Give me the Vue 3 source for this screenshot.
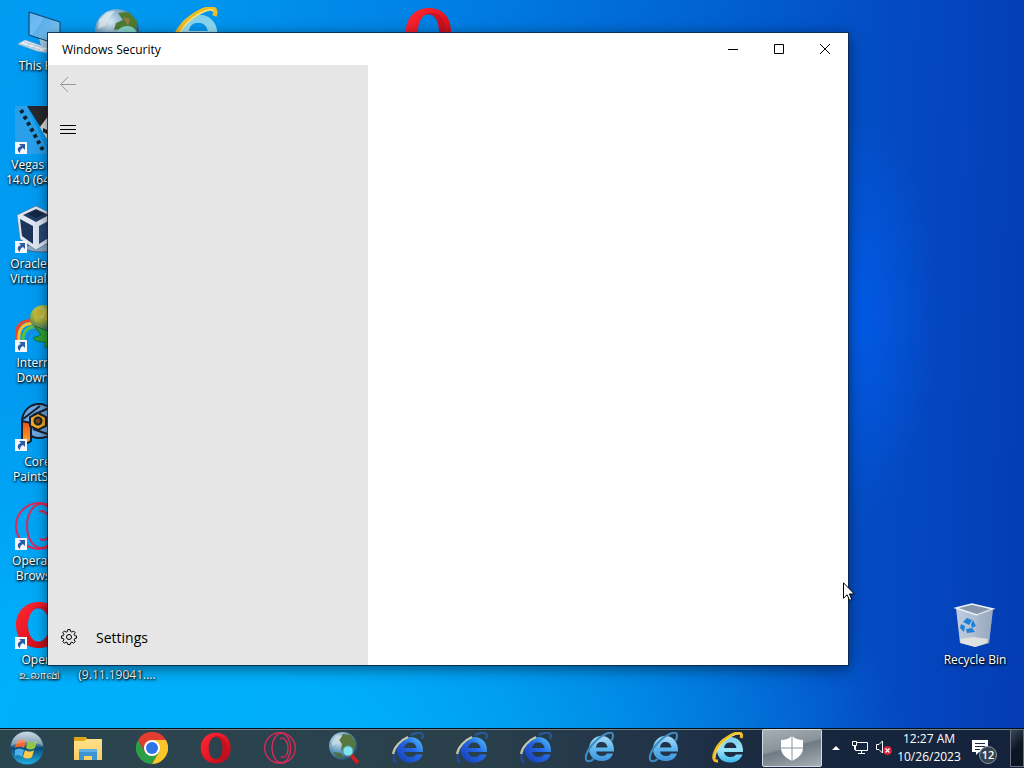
<script setup>
const desktopItems = [
  { icon: 'pc', lines: ['This PC'], col: 1, row: 1 },
  { icon: 'vegas', lines: ['Vegas Pro', '14.0 (64-bit)'], col: 1, row: 2, shortcut: true },
  { icon: 'vbox', lines: ['Oracle VM', 'VirtualBox'], col: 1, row: 3, shortcut: true },
  { icon: 'idm', lines: ['Internet', 'Downl...'], col: 1, row: 4, shortcut: true },
  { icon: 'paint', lines: ['Corel', 'PaintSh...'], col: 1, row: 5, shortcut: true },
  { icon: 'gx', lines: ['Opera GX', 'Browser'], col: 1, row: 6, shortcut: true },
  { icon: 'opera', lines: ['Opera', 'உலாவி'], col: 1, row: 7, shortcut: true },
  { icon: 'globe', lines: [], col: 2, row: 1 },
  { icon: '', lines: ['\u00a0', '(9.11.19041....'], col: 2, row: 7 },
  { icon: 'ie-gold', lines: [], col: 3, row: 1 },
  { icon: 'opera', lines: [], col: 6, row: 1 },
]

const taskbarItems = [
  { icon: 'folder', name: 'File Explorer' },
  { icon: 'chrome', name: 'Google Chrome' },
  { icon: 'opera', name: 'Opera' },
  { icon: 'gx', name: 'Opera GX' },
  { icon: 'globe-search', name: 'Web search' },
  { icon: 'ie-dark', name: 'Internet Explorer 6' },
  { icon: 'ie-dark', name: 'Internet Explorer 7' },
  { icon: 'ie-dark', name: 'Internet Explorer 8' },
  { icon: 'ie-light', name: 'Internet Explorer 9' },
  { icon: 'ie-light', name: 'Internet Explorer 10' },
  { icon: 'ie-gold', name: 'Internet Explorer 11' },
  { icon: 'shield', name: 'Windows Security', active: true },
]
</script>

<template>
  <div class="screen">
    <svg class="sprites" aria-hidden="true">
      <defs>
        <linearGradient id="g-screen" x1="0" y1="0" x2="1" y2="1">
          <stop offset="0" stop-color="#3f9fe6" /><stop offset="1" stop-color="#8ed0fa" />
        </linearGradient>
        <radialGradient id="g-globe" cx=".35" cy=".3" r=".75">
          <stop offset="0" stop-color="#d9ecf5" /><stop offset=".5" stop-color="#6fa0c4" /><stop offset="1" stop-color="#1d4a6e" />
        </radialGradient>
        <radialGradient id="g-idm" cx=".4" cy=".3" r=".75">
          <stop offset="0" stop-color="#e6e07a" /><stop offset=".5" stop-color="#8fa83a" /><stop offset="1" stop-color="#2c5f86" />
        </radialGradient>
        <linearGradient id="g-opera" x1="0" y1="0" x2="1" y2="1">
          <stop offset="0" stop-color="#ff2a35" /><stop offset=".55" stop-color="#e51422" /><stop offset="1" stop-color="#a80d18" />
        </linearGradient>
        <linearGradient id="g-ie-dark" x1="0" y1="1" x2="1" y2="0">
          <stop offset="0" stop-color="#163bb0" /><stop offset=".55" stop-color="#2467e6" /><stop offset="1" stop-color="#4fc8fa" />
        </linearGradient>
        <linearGradient id="g-ie-light" x1="0" y1="0" x2="0" y2="1">
          <stop offset="0" stop-color="#a5dcfa" /><stop offset=".5" stop-color="#5fb7f0" /><stop offset="1" stop-color="#3c94de" />
        </linearGradient>
        <linearGradient id="g-ie-gold" x1="0" y1="0" x2="0" y2="1">
          <stop offset="0" stop-color="#7ccdea" /><stop offset=".5" stop-color="#9be4fa" /><stop offset="1" stop-color="#3bb6e8" />
        </linearGradient>
        <linearGradient id="g-orange" x1="0" y1="0" x2="0" y2="1">
          <stop offset="0" stop-color="#e8501c" /><stop offset="1" stop-color="#ffb028" />
        </linearGradient>
        <linearGradient id="g-orb" x1="0" y1="0" x2="0" y2="1">
          <stop offset="0" stop-color="#c3d3de" /><stop offset=".4" stop-color="#537d96" /><stop offset=".5" stop-color="#0c4978" /><stop offset="1" stop-color="#22b4e6" />
        </linearGradient>
        <linearGradient id="g-bin" x1="0" y1="0" x2="1" y2="0">
          <stop offset="0" stop-color="#c9d3df" /><stop offset=".6" stop-color="#b6c2d2" /><stop offset="1" stop-color="#8d9db4" />
        </linearGradient>
        <linearGradient id="g-folder" x1="0" y1="0" x2="0" y2="1">
          <stop offset="0" stop-color="#ffe08a" /><stop offset="1" stop-color="#f8cf66" />
        </linearGradient>
      </defs>

      <symbol id="pc" viewBox="0 0 48 48">
        <path d="M24 31l8 3v7l6 2-8 3-12-4 8-3z" fill="#a9cde8" />
        <path d="M14 5l31 10v23L14 28z" fill="url(#g-screen)" stroke="#173e60" stroke-width="1" />
        <path d="M15 6l14 5-12 17-2-1z" fill="#8bccfa" opacity=".45" />
        <path d="M3 37l7-4 23 8-5 4-6-1z" fill="#e6eef5" stroke="#8fb2ce" stroke-width=".7" />
        <path d="M6 37l19 6M9 35l20 6M11 40l5-4M17 42l5-4" stroke="#a3bed3" stroke-width=".8" />
      </symbol>

      <symbol id="vegas" viewBox="0 0 48 48">
        <path d="M0 0h12l22 48H0z" fill="#35a2ea" opacity=".75" />
        <path d="M12 0h36L26 22z" fill="#29292d" />
        <path d="M25 21L36 6v34z" fill="#dedee0" />
        <path d="M28 22l4 2v4l-4-2z" fill="#222" />
        <path d="M6 4L29 46" stroke="#14202c" stroke-width="4" stroke-dasharray="3.5 3.5" />
      </symbol>

      <symbol id="vbox" viewBox="0 0 48 48">
        <ellipse cx="27" cy="43" rx="17" ry="4" fill="#8fa9c9" stroke="#46617f" />
        <path d="M21 1L2 10l3 24 16 11 17-10 2-25z" fill="#dfe7f2" stroke="#596b80" stroke-width=".6" />
        <path d="M21 4L8 10l13 7 13-7z" fill="#223b63" />
        <path d="M5 14l13 7v18L7 31z" fill="#1d3358" />
        <path d="M24 21l13-7-2 18-11 7z" fill="#2a4776" />
        <path d="M13 9l8-4 8 4-8 4z" fill="#142745" />
      </symbol>

      <symbol id="idm" viewBox="0 0 48 48">
        <path d="M2 36C-1 20 8 15 22 17" fill="none" stroke="#e9482f" stroke-width="3" />
        <path d="M4 38C2 23 10 18 22 20" fill="none" stroke="#f8c22c" stroke-width="3" />
        <path d="M8 38C7 27 13 22 23 23" fill="none" stroke="#5bc23c" stroke-width="3" />
        <path d="M12 38C12 30 17 26 24 26" fill="none" stroke="#2e7fd2" stroke-width="2" />
        <circle cx="28" cy="14" r="13" fill="url(#g-idm)" />
        <path d="M20 7c4-4 9-2 8 2s-6 4-6 8-5-4-2-10zM31 6l6 4-2 9-6-4z" fill="#c4b438" />
        <path d="M20 22l12 5 2-5 12 12-16 10v-6c-6 0-10-1-12-4l8-3z" fill="#2fa436" stroke="#14661f" stroke-width=".8" />
      </symbol>

      <symbol id="paint" viewBox="0 0 48 48">
        <path d="M7 19C7 8 15 1 24 1s18 8 18 18-8 16-18 16c-4 0-7-1-8-3V22z" fill="#6ca7e2" stroke="#16202c" stroke-width="2" />
        <path d="M7 18l9 2v18l-9 5z" fill="url(#g-orange)" stroke="#16202c" stroke-width="2" />
        <path d="M8 16l17-13M18 12l16-7M18 26l20 7" stroke="#16202c" stroke-width="2" />
        <path d="M23 10l8 4v9l-8 4-8-4v-9z" fill="#f5aa22" stroke="#16202c" stroke-width="2" />
        <circle cx="23" cy="18" r="3.500" fill="#7b451a" stroke="#16202c" stroke-width="2" />
      </symbol>

      <symbol id="gx" viewBox="0 0 48 48">
        <g fill="none" stroke="#d92a58" stroke-width="2">
          <circle cx="24" cy="24" r="23" />
          <ellipse cx="26" cy="24" rx="14" ry="22" />
          <path d="M24 10c5-3 12 3 12 14s-5 16-11 13" />
        </g>
      </symbol>

      <symbol id="opera" viewBox="0 0 48 48">
        <path fill-rule="evenodd" fill="url(#g-opera)" d="M24 1C10 1 1 11 1 24s9 23 23 23 22-10 22-23S38 1 24 1zm0 6c6 0 10 7 10 17s-4 17-10 17-11-7-11-17S18 7 24 7z" />
        <path d="M17 9c12-8 24 0 24 15S29 47 17 39c3 3 17 3 17-15S20 6 17 9z" fill="#b80f1d" opacity=".55" />
      </symbol>

      <symbol id="globe" viewBox="0 0 48 48">
        <circle cx="24" cy="24" r="22" fill="url(#g-globe)" />
        <path d="M25 6l11-1 8 9-1 10-8 3-8-5-6 1 2-7 7-3z" fill="#4e7c35" />
        <path d="M6 13l8-8 8-1-6 7-4 8-7 3z" fill="#dfe9ef" opacity=".8" />
        <path d="M30 10l7 2-2 7z" fill="#9a7c42" />
        <circle cx="34" cy="30" r="11" fill="#8de0da" opacity=".9" />
      </symbol>

      <symbol id="globe-search" viewBox="0 0 32 32">
        <circle cx="15" cy="14" r="14" fill="url(#g-globe)" />
        <path d="M15 2l8 1 5 8-2 8-8-2-5 2 1-7-3-4z" fill="#56783e" />
        <path d="M4 9l5-6 5 1-5 8-5 2z" fill="#c8d8dc" opacity=".8" />
        <path d="M5 20l8 1 3 6-7-2z" fill="#4b6e48" />
        <path d="M23 23l7 8" stroke="#cc1f24" stroke-width="4" />
        <circle cx="20" cy="19" r="5" fill="#7be4ec" stroke="#5e9fae" />
      </symbol>

      <symbol id="folder" viewBox="0 0 32 32">
        <path d="M2 5h12l2 3h14v20H2z" fill="#dca51c" />
        <path d="M2 9h10l3-2h15v21H2z" fill="url(#g-folder)" />
        <path d="M7 17h18v11h-5v-4h-8v4H7z" fill="#3e94d2" />
        <path d="M7 17h18v3H7z" fill="#5bb0e6" />
      </symbol>

      <symbol id="chrome" viewBox="0 0 32 32">
        <path d="M2.100 8A16 16 0 0 0 16 32l7-12-14 0z" fill="#2c9f47" />
        <path d="M16 8h13.900A16 16 0 0 1 16 32l7-12z" fill="#fbc628" />
        <path d="M2.100 8A16 16 0 0 1 29.900 8H16l-7 12z" fill="#e23d2e" />
        <circle cx="16" cy="16" r="8" fill="#fff" />
        <circle cx="16" cy="16" r="6" fill="#2e74e8" />
      </symbol>

      <symbol id="ie-dark" viewBox="0 0 32 32">
        <path d="M5 30C-3 30 4 13 15 7" fill="none" stroke="#27499b" stroke-width="2" />
        <path fill-rule="evenodd" fill="url(#g-ie-dark)" d="M31 20H12c.5 3 3 5 6.500 5 2.500 0 4.500-.8 5.500-2.500h6.500C28.500 28 24 30.500 18 30.500 10 30.500 5 25 5 18S10 5 18 5s13.500 5.500 13 15zM12 16h12.500c-.5-3.500-3-5.500-6.500-5.500s-5.500 2-6 5.500z" />
        <path d="M1 22C2 15 9 8 16 5" fill="none" stroke="#c6c9a4" stroke-width="2" />
        <path d="M19 3c8-4 14-3 11 4" fill="none" stroke="#285a9f" stroke-width="2" />
      </symbol>

      <symbol id="ie-light" viewBox="0 0 32 32">
        <path fill-rule="evenodd" fill="url(#g-ie-light)" d="M30 19.500H12c.5 3 3 4.500 6 4.500 2.500 0 4-.8 5-2.500h6C27.500 26.500 23.500 29 17.500 29 10 29 5 24 5 17S10 4 17.500 4 30.500 10 30 19.500zM12 15.500h11.500C23 12 21 10 17.500 10s-5 2-5.500 5.500z" />
        <path d="M10 27C0 34-1 24 8 13S30-3 29 4c0 2-1 4-2 5" fill="none" stroke="#3f8cbe" stroke-width="2" />
      </symbol>

      <symbol id="ie-gold" viewBox="0 0 32 32">
        <path fill-rule="evenodd" fill="url(#g-ie-gold)" d="M31 20H12c.5 3 3 5 6.500 5 2.500 0 4.500-.8 5.500-2.500h6.500C28.500 28 24 30.500 18 30.500 10 30.500 5 25 5 18S10 5 18 5s13.500 5.500 13 15zM12 16h12.500c-.5-3.500-3-5.500-6.500-5.500s-5.500 2-6 5.500z" />
        <path d="M6 29C-2 30 2 16 12 8S32-2 29 6" fill="none" stroke="#f0bb22" stroke-width="3" />
        <path d="M3 26C3 20 9 11 15 7S28 0 28 3" fill="none" stroke="#ffe785" stroke-width="1" />
      </symbol>

      <symbol id="shield" viewBox="0 0 32 32">
        <path d="M16 4c4 3 7 4 11 4v8c0 6-5 10-11 13C10 26 5 22 5 16V8c4 0 7-1 11-4z" fill="#fff" />
        <path d="M16 4v25M5 16h22" stroke="#8c96a0" stroke-width="1" />
      </symbol>
    </svg>

    <main class="desktop">
      <ul class="icons">
        <li
          v-for="item in desktopItems"
          :key="item.col + '-' + item.row"
          class="item"
          :class="['col-' + item.col, 'row-' + item.row]"
        >
          <div class="picture">
            <svg v-if="item.icon" class="big"><use :href="'#' + item.icon" /></svg>
            <svg v-if="item.shortcut" class="badge" viewBox="0 0 12 12">
              <path d="M0 0h12v12H0z" fill="#f4f7fb" />
              <path d="M4 2h6v6L8 6C6 7 5 8 5 11 1 8 3 5 6 4z" fill="#2b5ba5" />
            </svg>
          </div>
          <span v-for="line in item.lines" :key="line" class="line">{{ line }}</span>
        </li>
      </ul>

      <div class="item bin">
        <div class="picture">
          <svg class="big" viewBox="0 0 48 48">
            <path d="M5 7l16-4 21 5-4 34-14 4-15-4z" fill="url(#g-bin)" opacity=".95" />
            <path d="M5 7l16-4 21 5-16 6z" fill="#8896ad" stroke="#e9f0f8" stroke-width="1.500" />
            <path d="M26 14l-2 32 14-4 4-34z" fill="#a3b0c4" opacity=".6" />
            <path d="M9 38l14-2 14 2-1 4-12 4-14-4z" fill="#e8ebe4" opacity=".8" />
            <path d="M12 21l4-4 5 2-3 5zM10 23l4 2-1 6-4-4zM15 28l6-1 3 4-8 1zM22 19l3 6-4 2-1-4z" fill="#1c82d8" />
          </svg>
        </div>
        <span class="line">Recycle Bin</span>
      </div>

      <section class="window" aria-label="Windows Security">
        <header class="titlebar">
          <h1>Windows Security</h1>
          <button type="button" aria-label="Minimize"><svg viewBox="0 0 10 10"><path d="M0 5.500h10" /></svg></button>
          <button type="button" aria-label="Maximize"><svg viewBox="0 0 10 10"><path d="M.5.5h9v9h-9z" /></svg></button>
          <button type="button" aria-label="Close"><svg viewBox="0 0 10 10"><path d="M0 0l10 10M10 0L0 10" /></svg></button>
        </header>
        <div class="body">
          <nav class="sidebar">
            <button type="button" class="back" aria-label="Back" disabled>
              <svg viewBox="0 0 16 16"><path d="M16 7.500H1M8 0L.7 7.500 8 15" /></svg>
            </button>
            <button type="button" class="menu" aria-label="Open navigation">
              <svg viewBox="0 0 16 16"><path d="M0 4.500h16M0 8.500h16M0 12.500h16" /></svg>
            </button>
            <a href="#" class="settings">
              <svg viewBox="0 0 16 16">
                <path d="M6.800.6h2.400l.4 1.900 1.300.6 1.700-1.100 1.600 1.700-1.100 1.600.5 1.300 1.900.4v2.200l-1.900.4-.5 1.300 1.100 1.700-1.700 1.600-1.600-1.100-1.300.6-.4 1.800H6.800l-.4-1.800-1.300-.6-1.700 1.100L1.800 12.600l1.100-1.700-.5-1.300-1.900-.4V7l1.900-.4.5-1.300L1.800 3.700 3.400 2l1.700 1.100 1.300-.6z" />
                <circle cx="8" cy="8" r="2.500" />
              </svg>
              <span>Settings</span>
            </a>
          </nav>
          <div class="content"></div>
        </div>
      </section>
    </main>

    <footer class="taskbar">
      <button type="button" class="start" aria-label="Start">
        <svg viewBox="0 0 36 36">
          <circle cx="18" cy="18" r="17" fill="url(#g-orb)" stroke="#244657" />
          <path d="M8 11c3-2 6-2 9 0l-2 7c-3-2-6-2-9 0z" fill="#ee6a32" />
          <path d="M19 11c3 2 6 2 9 0l-2 7c-3 2-6 2-9 0z" fill="#91c742" />
          <path d="M6 20c3-2 6-2 9 0l-2 7c-2-2-5-2-7-1z" fill="#4fb0ec" />
          <path d="M16 20c3 2 6 2 9 0l-2 7c-3 2-6 2-9 0z" fill="#fbcb45" />
          <path d="M2 16C3 7 10 2 18 2s15 5 16 14c-8-5-22-5-32 0z" fill="#fff" opacity=".25" />
        </svg>
      </button>
      <div class="apps">
        <button
          v-for="app in taskbarItems"
          :key="app.name"
          type="button"
          class="app"
          :class="{ active: app.active }"
          :aria-label="app.name"
        >
          <svg><use :href="'#' + app.icon" /></svg>
        </button>
      </div>
      <div class="tray">
        <button type="button" class="more" aria-label="Show hidden icons">
          <svg viewBox="0 0 8 8"><path d="M0 6l4-4 4 4z" fill="#fff" /></svg>
        </button>
        <button type="button" class="status" aria-label="Network">
          <svg viewBox="0 0 16 16" fill="none" stroke="#fff">
            <path d="M5 2.500h10.500v8H3.500V6M9.500 11v3M6 13.500h7M.5 1.500h4v4h-4zM2.500 6v3.500h1" />
          </svg>
        </button>
        <button type="button" class="status" aria-label="Volume muted">
          <svg viewBox="0 0 16 16">
            <path d="M.5 4.500H3L6.500 1v12L3 9.500H.5z" fill="none" stroke="#fff" />
            <circle cx="11.500" cy="10.500" r="4.500" fill="#d81e34" />
            <path d="M9.500 8.500l4 4M13.500 8.500l-4 4" stroke="#fff" stroke-width="1.200" />
          </svg>
        </button>
        <button type="button" class="clock">
          <span>12:27 AM</span>
          <span>10/26/2023</span>
        </button>
        <button type="button" class="notes" aria-label="Notifications">
          <svg viewBox="0 0 16 16">
            <path d="M0 0h16v12H7l-3 3v-3H0z" fill="#fff" />
            <path d="M3 3.500h10M3 6.500h10M3 9.500h5" stroke="#1a2a3f" />
          </svg>
          <span class="count">12</span>
        </button>
        <button type="button" class="peek" aria-label="Show desktop"></button>
      </div>
    </footer>

    <svg class="cursor" viewBox="0 0 12 19" aria-hidden="true">
      <path d="M.5.8v15.400l3.600-3.400 2.500 5.600 2.200-1-2.400-5.400h5z" fill="#fff" stroke="#000" />
    </svg>
  </div>
</template>

<style>
body {
  margin: 0;
}
</style>

<style scoped>
.screen {
  position: relative;
  display: flex;
  flex-direction: column;
  height: 100vh;
  overflow: hidden;
  font-family: "Open Sans", "Noto Sans", sans-serif;
  font-size: 12px;
  background:
    radial-gradient(ellipse 90px 200px at 83% 41%, rgba(0, 100, 255, 0.6), transparent),
    radial-gradient(ellipse 74% 50% at 15% 100%, rgba(0, 178, 252, 0.9) 30%, transparent),
    linear-gradient(92deg, #009cf2 0%, #0095ee 20%, #0080e4 42%, #0062d0 68%, #044cc4 84%, #043cb4 100%);
}

button {
  display: flex;
  align-items: center;
  justify-content: center;
  padding: 0;
  border: 0;
  background: none;
  color: inherit;
  font: inherit;
}

.sprites {
  position: absolute;
  width: 0;
  height: 0;
}

.desktop {
  position: relative;
  flex: 1;
}

.icons {
  display: grid;
  grid-template-columns: repeat(6, 78px);
  grid-template-rows: repeat(7, 99px);
  margin: 0;
  padding: 7px 0 0;
  list-style: none;
}

.item {
  display: flex;
  flex-direction: column;
  align-items: center;
  color: #fff;
  text-shadow: 1px 1px 2px #000, 0 1px 3px #000;
}

.col-1 { grid-column: 1; }
.col-2 { grid-column: 2; }
.col-3 { grid-column: 3; }
.col-6 { grid-column: 6; }
.row-1 { grid-row: 1; }
.row-2 { grid-row: 2; }
.row-3 { grid-row: 3; }
.row-4 { grid-row: 4; }
.row-5 { grid-row: 5; }
.row-6 { grid-row: 6; }
.row-7 { grid-row: 7; }

.picture {
  position: relative;
  width: 48px;
  height: 48px;
  margin-bottom: 3px;
}

.big {
  display: block;
  width: 48px;
  height: 48px;
}

.badge {
  position: absolute;
  left: 0;
  bottom: 0;
  width: 12px;
  height: 12px;
}

.line {
  line-height: 15px;
  white-space: nowrap;
}

.bin {
  position: absolute;
  right: 10px;
  bottom: 61px;
  width: 78px;
}

.window {
  position: absolute;
  inset: 33px 176px 63px 48px;
  display: flex;
  flex-direction: column;
  background: #fff;
  color: #000;
  outline: 1px solid rgba(10, 40, 75, 0.85);
  box-shadow: 0 3px 14px rgba(0, 0, 0, 0.55);
}

.titlebar {
  display: flex;
  height: 32px;
}

.titlebar h1 {
  flex: 1;
  margin: 0;
  padding-left: 14px;
  font-size: 12px;
  font-weight: 400;
  line-height: 33px;
}

.titlebar button {
  width: 46px;
}

.titlebar svg {
  width: 10px;
  height: 10px;
  overflow: visible;
  fill: none;
  stroke: #000;
}

.body {
  display: flex;
  flex: 1;
}

.sidebar {
  display: flex;
  flex-direction: column;
  width: 40%;
  background: #e6e6e6;
}

.sidebar svg {
  width: 16px;
  height: 16px;
  fill: none;
  stroke: #000;
}

.back,
.menu {
  width: 40px;
  height: 40px;
}

.menu {
  margin-top: 4px;
}

.sidebar .back svg {
  stroke: #999;
}

.settings {
  display: flex;
  align-items: center;
  gap: 19px;
  height: 40px;
  margin-top: auto;
  margin-bottom: 8px;
  padding-left: 13px;
  color: #000;
  font-size: 14px;
  text-decoration: none;
}

.content {
  flex: 1;
}

.taskbar {
  box-sizing: border-box;
  display: flex;
  height: 40px;
  padding-bottom: 1px;
  border-top: 1px solid #061019;
  box-shadow: inset 0 1px #6d8490;
  background: linear-gradient(90deg, #2b454f 0%, #2a414c 45%, #213348 65%, #16263d 80%, #14233b 100%);
  color: #fff;
}

.start {
  width: 54px;
}

.start svg {
  width: 36px;
  height: 36px;
}

.apps {
  display: flex;
  flex: 1;
  gap: 4px;
  padding-left: 4px;
}

.app {
  box-sizing: border-box;
  width: 60px;
}

.app svg {
  width: 32px;
  height: 32px;
}

.active {
  border: 1px solid #d5dade;
  border-radius: 2px;
  background: linear-gradient(165deg, #a7afb5 0%, #8a949b 45%, #6f7a83 50%, #a9b0b6 100%);
}

.tray {
  display: flex;
}

.more {
  width: 24px;
}

.more svg {
  width: 8px;
  height: 8px;
}

.status {
  width: 24px;
}

.status svg {
  width: 16px;
  height: 16px;
}

.clock {
  flex-direction: column;
  width: 66px;
  font-size: 12px;
  line-height: 18px;
}

.notes {
  position: relative;
  width: 48px;
}

.notes svg {
  width: 16px;
  height: 16px;
  margin-right: 12px;
}

.count {
  position: absolute;
  left: 17px;
  bottom: 3px;
  width: 16px;
  height: 16px;
  border: 1px solid #8994a0;
  border-radius: 50%;
  background: #36434f;
  font-size: 11px;
  font-weight: 600;
  line-height: 16px;
  text-align: center;
}

.peek {
  width: 14px;
  border: 1px solid #66717e;
  background: linear-gradient(135deg, #39485a, #0b1524 50%);
}

.cursor {
  position: absolute;
  left: 843px;
  top: 582px;
  width: 12px;
  height: 19px;
}
</style>
